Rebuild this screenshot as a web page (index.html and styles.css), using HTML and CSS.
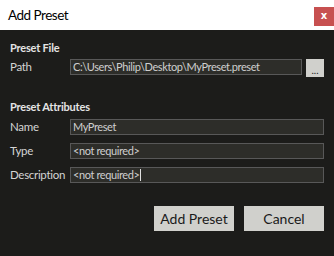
FILE: index.html
```html
<!DOCTYPE html>
<html>
<head>
<meta charset="utf-8">
<link rel="stylesheet" href="styles.css">
</head>
<body>
<div class="window">
  <div class="titlebar">
    <span class="title">Add Preset</span>
    <span class="close">x</span>
  </div>
  <div class="content">
    <div class="heading">Preset File</div>
    <div class="row path-row">
      <span class="label">Path</span>
      <div class="input path-input">C:\Users\Philip\Desktop\MyPreset.preset</div>
      <div class="browse">...</div>
    </div>
    <div class="heading attr-heading">Preset Attributes</div>
    <div class="row">
      <span class="label">Name</span>
      <div class="input">MyPreset</div>
    </div>
    <div class="row">
      <span class="label">Type</span>
      <div class="input">&lt;not required&gt;</div>
    </div>
    <div class="row">
      <span class="label">Description</span>
      <div class="input">&lt;not required&gt;<span class="caret"></span></div>
    </div>
    <div class="actions">
      <div class="btn">Add Preset</div>
      <div class="btn">Cancel</div>
    </div>
  </div>
</div>
</body>
</html>
```

FILE: styles.css
```css
html, body {
  margin: 0;
  padding: 0;
  background: #1c1c1a;
}
.window {
  width: 334px;
  height: 256px;
  display: flex;
  flex-direction: column;
  font-family: "Lato", "Open Sans", sans-serif;
}
.titlebar {
  height: 30px;
  background: #ffffff;
  display: flex;
  align-items: flex-start;
  justify-content: space-between;
}
.title {
  margin: 6px 0 0 8px;
  font-size: 13.5px;
  letter-spacing: -0.5px;
  line-height: 18px;
  color: #000;
}
.close {
  margin-top: 7px;
  width: 20px;
  height: 19px;
  background: #c75050;
  color: #fff;
  font-family: "DejaVu Sans", sans-serif;
  font-weight: bold;
  font-size: 10px;
  line-height: 18px;
  text-align: center;
}
.content {
  flex: 1;
  background: #1c1c1a;
  padding: 11px 10px 0 10px;
  display: flex;
  flex-direction: column;
}
.heading {
  font-size: 11px;
  font-weight: bold;
  letter-spacing: -0.2px;
  line-height: 14px;
  color: #e4e4e4;
  margin-bottom: 4px;
}
.attr-heading {
  margin-top: 17px;
  margin-bottom: 5px;
}
.row {
  display: flex;
  align-items: center;
  height: 16px;
  margin-bottom: 8px;
}
.label {
  width: 60px;
  flex: none;
  font-size: 11.5px;
  letter-spacing: -0.3px;
  color: #d4d4d4;
  line-height: 16px;
}
.input {
  flex: 1;
  height: 14px;
  border: 1px solid #585858;
  background: #2d2d29;
  color: #cfcfcf;
  font-size: 11px;
  letter-spacing: -0.4px;
  line-height: 14px;
  padding-left: 2px;
  white-space: nowrap;
  overflow: hidden;
  display: flex;
  align-items: center;
}
.path-input {
  flex: none;
  width: 228px;
}
.browse {
  margin-left: 4px;
  width: 18px;
  height: 18px;
  background: #d0d0cc;
  color: #222;
  font-size: 10px;
  line-height: 22px;
  text-align: center;
  align-self: flex-start;
}
.caret {
  display: inline-block;
  width: 1px;
  height: 12px;
  background: #e0e0e0;
  margin-left: 1px;
}
.actions {
  display: flex;
  justify-content: flex-end;
  gap: 10px;
  margin-top: 15px;
}
.btn {
  width: 80px;
  height: 25px;
  background: #d0d0cc;
  color: #1a1a1a;
  font-size: 14px;
  line-height: 25px;
  text-align: center;
}
```
